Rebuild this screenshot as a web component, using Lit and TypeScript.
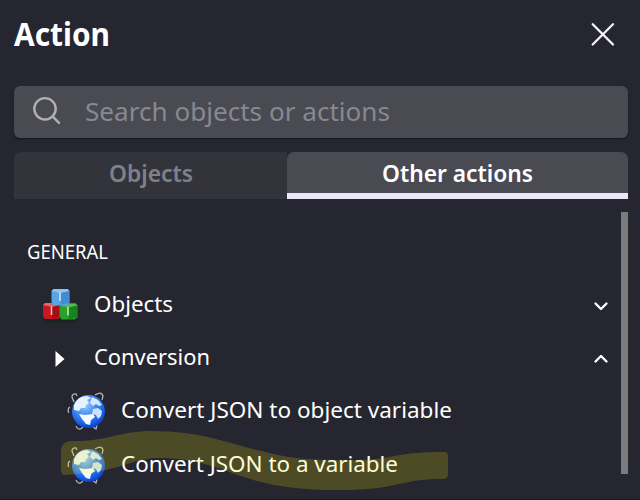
import { LitElement, html, css, svg, nothing } from "lit";
import { customElement } from "lit/decorators.js";

// A line of text fitted to a given width; the baseline sits at 30px of a 40px box.
const line = (text: string, size: number, width: number, cls = "") => html`
  <svg class="line ${cls}" width=${width + 2} height="40">
    <text x="0" y="30" font-size=${size} textLength=${width} lengthAdjust="spacingAndGlyphs">${text}</text>
  </svg>`;

const cube = (x: number, y: number, light: string, mid: string, dark: string) => svg`
  <g transform="translate(${x} ${y})">
    <path d="M0 3 2 1H16L18 3V15L15 17H2L0 14Z" fill=${mid}/>
    <path d="M0 3 2 1H16L18 3 9 5Z" fill=${light}/>
    <path d="M9 5 18 3V15L9 17Z" fill=${dark} opacity=".55"/>
    <path d="M8.500 4.500V13" stroke="#fff" stroke-width="1.5" opacity=".75"/>
  </g>`;

const cubes = html`<svg class="cubes" width="38" height="36" viewBox="0 0 38 36">
  <ellipse cx="19" cy="32" rx="17" ry="2.500" fill="#18251f"/>
  <g class="soft">
  ${cube(1, 14, "#d4686e", "#c91620", "#8b0711")}
  ${cube(17.5, 14.5, "#5cb65c", "#28a12b", "#08700d")}
  ${cube(9.5, 0, "#8dc5ef", "#58a5e4", "#2f78c8")}
  </g>
</svg>`;

const globe = html`<svg class="globe" width="42" height="42" viewBox="0 0 42 42">
  <defs><radialGradient id="sea" cx=".4" cy=".3" r=".75">
    <stop offset="0" stop-color="#9cccff"/><stop offset=".45" stop-color="#3f88f4"/>
    <stop offset=".8" stop-color="#155ae6"/><stop offset="1" stop-color="#0a34b4"/>
  </radialGradient></defs>
  <path class="wire" d="M6 11 4 6Q4 2.500 8 3L9 5M27 4Q34 0 35 5L34 9M2 16Q-.5 17 .5 22M8 35Q10 40 14 37L15 35M25 36 28 38 29 34"/>
  <circle cx="20.500" cy="20.500" r="16.500" fill="url(#sea)"/>
  <g class="soft">
    <path d="M6 14Q10 5 19 5L23 7 19 9 21 12 18 14 17 17 13 17 11 20 6 19Z" fill="#e7f2ff"/>
    <path d="M24 6 30 9 34 14 31 15 28 13 25 15 22 12Z" fill="#d6e9ff"/>
    <path d="M25 18 30 17 34 20 33 25 30 28 28 24 24 23Z" fill="#c9e2ff"/>
    <path d="M11 23 17 24 25 23 27 26 23 29 22 34 18 33 14 28Z" fill="#f6fbff"/>
  </g>
</svg>`;

const chevron = (up: boolean) => html`<svg class="chevron" width="16" height="12" viewBox="0 0 16 12">
  <path d=${up ? "M2.500 8.500 8 3 13.500 8.500" : "M2.500 3.500 8 9 13.500 3.500"}/>
</svg>`;

const rows = [
  { label: "Objects", width: 79, icon: cubes, child: false, arrow: chevron(false) },
  {
    label: "Conversion", width: 116, child: false, arrow: chevron(true),
    icon: html`<svg class="play" width="12" height="18" viewBox="0 0 12 18"><path d="M1.500 1 10.500 9 1.500 17Z"/></svg>`,
  },
  { label: "Convert JSON to object variable", width: 331, icon: globe, child: true, arrow: nothing },
  { label: "Convert JSON to a variable", width: 277, icon: globe, child: true, arrow: nothing },
];

@customElement("app-root")
export class AppRoot extends LitElement {
  static styles = css`
    :host { display: block; height: 500px; overflow: hidden; font-family: "Noto Sans", "Open Sans", sans-serif; }
    * { box-sizing: border-box; }
    .panel { position: relative; height: 500px; padding: 0 12px 0 14px; background: #25262f; color: #fff; overflow: hidden; border-bottom: 1px solid #1b1a22; }
    svg { display: block; flex: none; overflow: visible; }
    .line { fill: currentColor; }
    .soft { filter: blur(0.5px); }
    .header { height: 86px; display: flex; justify-content: space-between; padding: 16px 12px 0 0; }
    .title { font-weight: 700; }
    .close { margin-top: 5px; fill: none; stroke: #f6f4ff; stroke-width: 2.3; stroke-linecap: round; }
    .search { height: 52px; display: flex; align-items: flex-start; padding: 5px 0 0 18px; gap: 23px; border-radius: 6px; background: #4a4a53; box-shadow: 0 1px 2px #15151d; color: #888891; }
    .lens { margin-top: 4px; fill: none; stroke: #b0b0b4; stroke-width: 2.4; stroke-linecap: round; }
    .tabs { display: grid; grid-template-columns: 273px 1fr; height: 47px; margin-top: 14px; }
    .tab { display: flex; justify-content: center; padding-left: 2px; background: #33333c; color: #808089; border-radius: 7px 0 0 0; font-weight: 600; }
    .tab.active { background: #4a4a53; color: #fff; border-radius: 7px 7px 0 0; border-bottom: 6px solid #ece6f8; }
    .body { display: flex; justify-content: space-between; height: 262px; margin-top: 13px; }
    .list { flex: 1; padding: 17px 12px 0 13px; }
    .section { height: 48px; }
    .row { display: flex; align-items: center; height: 53.4px; }
    .icon { width: 66.5px; display: flex; align-items: center; }
    .child .icon { width: 93.5px; padding-left: 41px; }
    .cubes { margin: 4px 0 0 15px; }
    .globe { margin-top: 4px; }
    .play { margin: 4px 0 0 27px; fill: #fff; }
    .label { height: 40px; margin-top: -4px; flex: 1; }
    .chevron { margin-top: 4px; fill: none; stroke: #fff; stroke-width: 2.4; stroke-linecap: round; stroke-linejoin: round; }
    .wire { fill: none; stroke: #aeb4bb; stroke-width: 1.3; }
    .bar { width: 7px; background: #7b7b7d; }
    .marker { position: absolute; left: 0; top: 0; fill: rgba(255, 246, 0, 0.18); pointer-events: none; }
  `;

  render() {
    return html`<div class="panel">
      <div class="header">
        <div class="title">${line("Action", 32, 96)}</div>
        <svg class="close" width="26" height="26" viewBox="0 0 26 26"><path d="M2.700 3.200 23 23.500M23 3.200 2.700 23.500"/></svg>
      </div>
      <div class="search">
        <svg class="lens" width="30" height="32" viewBox="0 0 30 32"><circle cx="13" cy="13.800" r="10.700"/><path d="m20.800 21.600 6.200 6.200"/></svg>
        ${line("Search objects or actions", 26, 305)}
      </div>
      <div class="tabs">
        <div class="tab">${line("Objects", 23.5, 84)}</div>
        <div class="tab active">${line("Other actions", 23.5, 151)}</div>
      </div>
      <div class="body">
        <div class="list">
          <div class="section">${line("GENERAL", 19.5, 81)}</div>
          ${rows.map((r) => html`<div class="row ${r.child ? "child" : ""}">
            <div class="icon">${r.icon}</div>
            <div class="label">${line(r.label, 22.5, r.width)}</div>
            ${r.arrow}
          </div>`)}
        </div>
        <div class="bar"></div>
      </div>
      <svg class="marker" width="640" height="500">
        <path d="M61 449Q62 442 70 441C105 442 120 431 152 431C205 431 231 445 262 451C290 459 310 460 350 460C398 460 389 452 445 452Q448 452 448 456V474Q448 479 443 479C398 479 400 490 340 490C295 490 265 485 235 474C205 462 180 457 155 458C128 460 120 472 65 475Q61 475 61 470Z"/>
      </svg>
    </div>`;
  }
}
